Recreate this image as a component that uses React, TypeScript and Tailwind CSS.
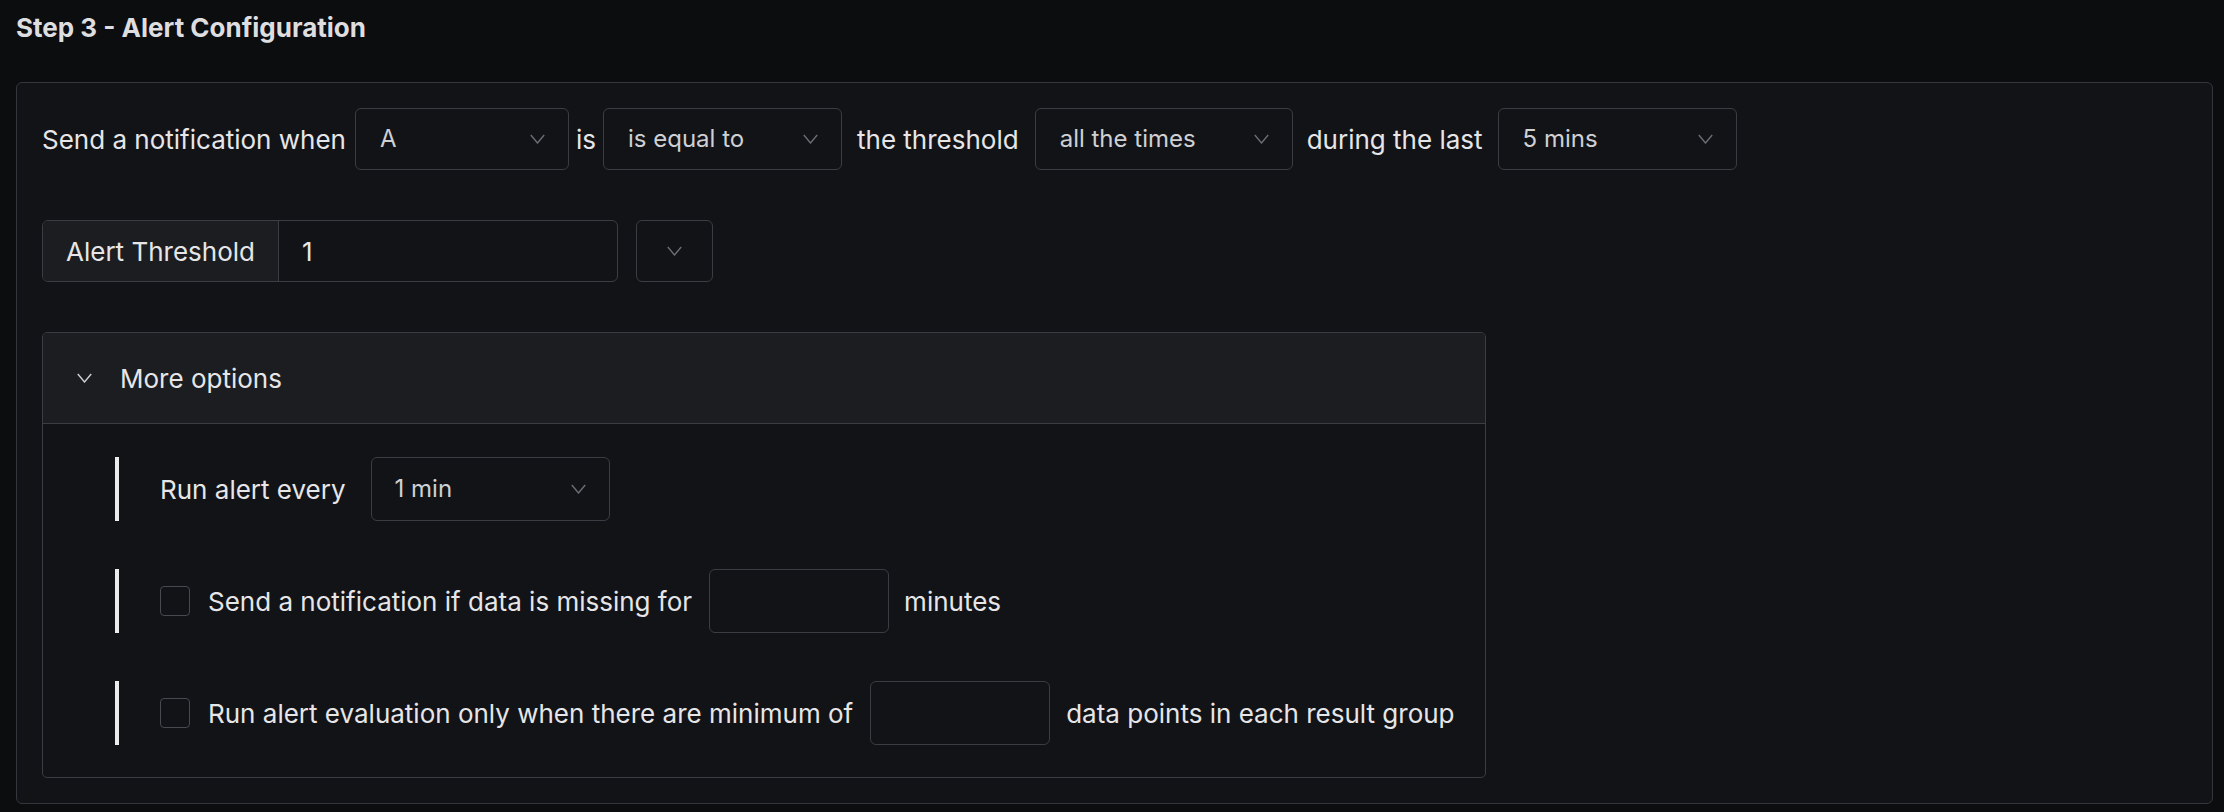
import React from "react";

function Chevron({ className = "" }: { className?: string }) {
  return (
    <svg
      width="15"
      height="10"
      viewBox="0 0 15 10"
      fill="none"
      stroke="currentColor"
      strokeWidth="1.4"
      className={className}
    >
      <polyline points="0.8,1 7.5,9 14.2,1" />
    </svg>
  );
}

function Select({ value, width }: { value: string; width: string }) {
  return (
    <div
      className={`${width} flex h-[62px] shrink-0 items-center justify-between rounded-[6px] border border-[#3a3d44] bg-[#121317] pl-[24px] pr-[23px]`}
    >
      <span className="text-[24px] text-[#cfd0d3]">{value}</span>
      <Chevron className="text-[#6a6d75]" />
    </div>
  );
}

function Checkbox() {
  return <div className="h-[30px] w-[30px] shrink-0 rounded-[4px] border border-[#464950]" />;
}

const OptionRow: React.FC<{ children: React.ReactNode }> = ({ children }) => (
  <div className="flex h-[64px] items-center">
    <div className="h-[64px] w-[4px] bg-[#ececec]" />
    <div className="ml-[41px] flex items-center">{children}</div>
  </div>
);

export default function App() {
  return (
    <div className="min-h-screen w-full bg-[#0c0d0f] pb-[9px] pl-[16px] pr-[11px] text-[26px] text-[#e6e6e8] [font-family:Inter,sans-serif]">
      <h1 className="pt-[13px] text-[26px] font-bold leading-[30px] text-[#dedee0]">
        Step 3 - Alert Configuration
      </h1>

      <div className="mt-[39px] rounded-[6px] border border-[#33363d] bg-[#121317] pb-[25px] pl-[25px] pt-[25px]">
        {/* condition row */}
        <div className="flex h-[62px] items-center">
          <span>Send a notification when</span>
          <div className="ml-[9px]">
            <Select value="A" width="w-[214px]" />
          </div>
          <span className="ml-[7px]">is</span>
          <div className="ml-[7px]">
            <Select value="is equal to" width="w-[239px]" />
          </div>
          <span className="ml-[15px]">the threshold</span>
          <div className="ml-[16px]">
            <Select value="all the times" width="w-[258px]" />
          </div>
          <span className="ml-[14px]">during the last</span>
          <div className="ml-[15px]">
            <Select value="5 mins" width="w-[239px]" />
          </div>
        </div>

        {/* threshold */}
        <div className="mt-[50px] flex h-[62px] items-center">
          <div className="flex h-[62px] w-[576px] overflow-hidden rounded-[6px] border border-[#3a3d44]">
            <div className="flex items-center border-r border-[#3a3d44] bg-[#1c1d21] px-[23px]">
              Alert Threshold
            </div>
            <div className="flex flex-1 items-center pl-[23px]">1</div>
          </div>
          <div className="ml-[18px] flex h-[62px] w-[77px] items-center justify-center rounded-[6px] border border-[#3a3d44]">
            <Chevron className="text-[#6a6d75]" />
          </div>
        </div>

        {/* more options */}
        <div className="mt-[50px] w-[1444px] overflow-hidden rounded-[5px] border border-[#3a3d44]">
          <div className="flex h-[91px] items-center border-b border-[#3a3d44] bg-[#1c1d21] pl-[34px]">
            <Chevron className="text-[#cfd0d3]" />
            <span className="ml-[28px]">More options</span>
          </div>
          <div className="flex flex-col gap-[48px] pb-[32px] pl-[72px] pt-[33px]">
            <OptionRow>
              <span>Run alert every</span>
              <div className="ml-[25px]">
                <div className="flex h-[64px] w-[239px] items-center justify-between rounded-[6px] border border-[#3a3d44] pl-[23px] pr-[23px]">
                  <span className="text-[24px] text-[#cfd0d3]">1 min</span>
                  <Chevron className="text-[#6a6d75]" />
                </div>
              </div>
            </OptionRow>
            <OptionRow>
              <Checkbox />
              <span className="ml-[18px]">Send a notification if data is missing for</span>
              <div className="ml-[17px] h-[64px] w-[180px] rounded-[6px] border border-[#3a3d44]" />
              <span className="ml-[15px]">minutes</span>
            </OptionRow>
            <OptionRow>
              <Checkbox />
              <span className="ml-[18px]">
                Run alert evaluation only when there are minimum of
              </span>
              <div className="ml-[17px] h-[64px] w-[180px] rounded-[6px] border border-[#3a3d44]" />
              <span className="ml-[16px]">data points in each result group</span>
            </OptionRow>
          </div>
        </div>
      </div>
    </div>
  );
}
